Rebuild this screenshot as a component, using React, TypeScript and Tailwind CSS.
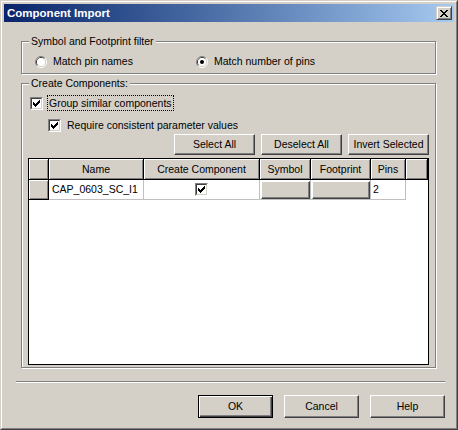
import React from "react";

const raised =
  "border border-t-white border-l-white border-r-[#404040] border-b-[#404040] shadow-[inset_-1px_-1px_0_#808080] bg-[#d4d0c8]";

function Tick() {
  return (
    <svg width="7" height="7" viewBox="0 0 7 7" shapeRendering="crispEdges">
      <path
        fill="#000"
        d="M0 2h1v3H0zM1 3h1v3H1zM2 4h1v3H2zM3 3h1v3H3zM4 2h1v3H4zM5 1h1v3H5zM6 0h1v3H6z"
      />
    </svg>
  );
}

function CheckBox() {
  return (
    <span className="inline-flex w-[13px] h-[13px] shrink-0 border border-t-[#808080] border-l-[#808080] border-r-white border-b-white">
      <span className="flex flex-1 items-center justify-center bg-white border border-t-[#404040] border-l-[#404040] border-r-[#d4d0c8] border-b-[#d4d0c8]">
        <Tick />
      </span>
    </span>
  );
}

function Radio({ on }: { on?: boolean }) {
  return (
    <svg width="12" height="12" viewBox="0 0 12 12" className="shrink-0">
      <path d="M2.11 9.89A5.5 5.5 0 0 1 9.89 2.11" fill="none" stroke="#808080" />
      <path d="M9.89 2.11A5.5 5.5 0 0 1 2.11 9.89" fill="none" stroke="#fff" />
      <path d="M2.82 9.18A4.5 4.5 0 0 1 9.18 2.82" fill="none" stroke="#404040" />
      <path d="M9.18 2.82A4.5 4.5 0 0 1 2.82 9.18" fill="none" stroke="#d4d0c8" />
      <circle cx="6" cy="6" r="4" fill="#fff" />
      {on && <circle cx="6" cy="6" r="2" fill="#000" />}
    </svg>
  );
}

function Group({
  label,
  className,
  children,
}: {
  label: string;
  className: string;
  children: React.ReactNode;
}) {
  return (
    <div
      className={`relative border border-[#808080] shadow-[inset_1px_1px_0_#fff,1px_1px_0_#fff] ${className}`}
    >
      <span className="absolute left-[7px] -top-[7px] px-[2px] bg-[#d4d0c8] leading-[13px]">
        {label}
      </span>
      {children}
    </div>
  );
}

const head =
  "flex items-center justify-center bg-[#d4d0c8] border-r border-b border-black shadow-[inset_1px_1px_0_#fff,inset_-1px_-1px_0_#808080]";
const cell = "flex items-center bg-white border-r border-b border-[#c0c0c0]";

export default function App() {
  return (
    <div className="w-[458px] h-[430px] bg-[#d4d0c8] font-['Liberation_Sans',Arial,sans-serif] text-[10.5px] leading-[13px] text-black">
      <div className="h-full border border-t-[#d4d0c8] border-l-[#d4d0c8] border-r-[#404040] border-b-[#404040]">
        <div className="h-full flex flex-col p-[2px] border border-t-white border-l-white border-r-[#808080] border-b-[#808080]">
          {/* title bar */}
          <div className="h-[18px] shrink-0 flex items-center justify-between pl-[3px] pr-[2px] bg-linear-to-r from-[#0a246a] to-[#a6caf0]">
            <span className="text-white font-bold text-[11.5px]">Component Import</span>
            <div className="w-[16px] h-[14px] flex items-center justify-center bg-[#d4d0c8] border border-t-[#d4d0c8] border-l-[#d4d0c8] border-r-[#404040] border-b-[#404040] shadow-[inset_1px_1px_0_#fff,inset_-1px_-1px_0_#808080]">
              <svg width="8" height="7" viewBox="0 0 8 7" shapeRendering="crispEdges">
                <path
                  fill="#000"
                  d="M0 0h2v1H0zM6 0h2v1H6zM1 1h2v1H1zM5 1h2v1H5zM2 2h4v1H2zM3 3h2v1H3zM2 4h4v1H2zM1 5h2v1H1zM5 5h2v1H5zM0 6h2v1H0zM6 6h2v1H6z"
                />
              </svg>
            </div>
          </div>

          {/* filter */}
          <Group label="Symbol and Footprint filter" className="mt-[19px] ml-[17px] w-[415px] h-[33px]">
            <div className="flex items-center h-full pt-[8px] pl-[13px]">
              <label className="flex items-center gap-[6px] w-[161px]">
                <Radio />
                <span>Match pin names</span>
              </label>
              <label className="flex items-center gap-[6px]">
                <Radio on />
                <span>Match number of pins</span>
              </label>
            </div>
          </Group>

          {/* create components */}
          <Group label="Create Components:" className="mt-[9px] ml-[17px] w-[415px] h-[285px] flex flex-col">
            <div className="mt-[11px] ml-[8px] h-[16px] flex items-center gap-[4px]">
              <CheckBox />
              <span className="h-full flex items-center px-[1px] border border-dotted border-black">
                Group similar components
              </span>
            </div>
            <div className="mt-[6px] ml-[26px] h-[16px] flex items-center gap-[6px]">
              <CheckBox />
              <span>Require consistent parameter values</span>
            </div>
            <div className="mt-[1px] pr-[6px] flex justify-end gap-[6px]">
              <button className={`w-[81px] h-[21px] ${raised}`}>Select All</button>
              <button className={`w-[81px] h-[21px] ${raised}`}>Deselect All</button>
              <button className={`w-[81px] h-[21px] ${raised}`}>Invert Selected</button>
            </div>

            {/* grid */}
            <div className="mt-[3px] ml-[6px] w-[401px] h-[207px] border border-black bg-white flex flex-col">
              <div className="flex h-[21px]">
                <div className={`${head} w-[20px]`} />
                <div className={`${head} w-[95px]`}>Name</div>
                <div className={`${head} w-[116px]`}>Create Component</div>
                <div className={`${head} w-[51px]`}>Symbol</div>
                <div className={`${head} w-[60px]`}>Footprint</div>
                <div className={`${head} w-[35px]`}>Pins</div>
                <div className={`${head} w-[22px]`} />
              </div>
              <div className="flex h-[20px]">
                <div className={`${head} w-[20px]`} />
                <div className={`${cell} w-[95px] pl-[3px]`}>CAP_0603_SC_I1</div>
                <div className={`${cell} w-[116px] justify-center`}>
                  <CheckBox />
                </div>
                <div className={`${cell} w-[51px] items-stretch pl-[1px] pt-[1px]`}>
                  <div className={`flex-1 ${raised}`} />
                </div>
                <div className={`${cell} w-[60px] items-stretch pl-[1px] pt-[1px]`}>
                  <div className={`flex-1 ${raised}`} />
                </div>
                <div className={`${cell} w-[35px] pl-[2px]`}>2</div>
              </div>
            </div>
          </Group>

          <div className="mt-[13px] ml-[12px] w-[429px] h-[2px] border-t border-t-[#808080] border-b border-b-white" />

          <div className="mt-[12px] pr-[9px] flex justify-end gap-[11px]">
            <button className="w-[75px] h-[23px] bg-[#d4d0c8] border border-black shadow-[inset_1px_1px_0_#fff,inset_-1px_-1px_0_#404040,inset_-2px_-2px_0_#808080]">
              OK
            </button>
            <button className={`w-[75px] h-[23px] ${raised}`}>Cancel</button>
            <button className={`w-[75px] h-[23px] ${raised}`}>Help</button>
          </div>
        </div>
      </div>
    </div>
  );
}
